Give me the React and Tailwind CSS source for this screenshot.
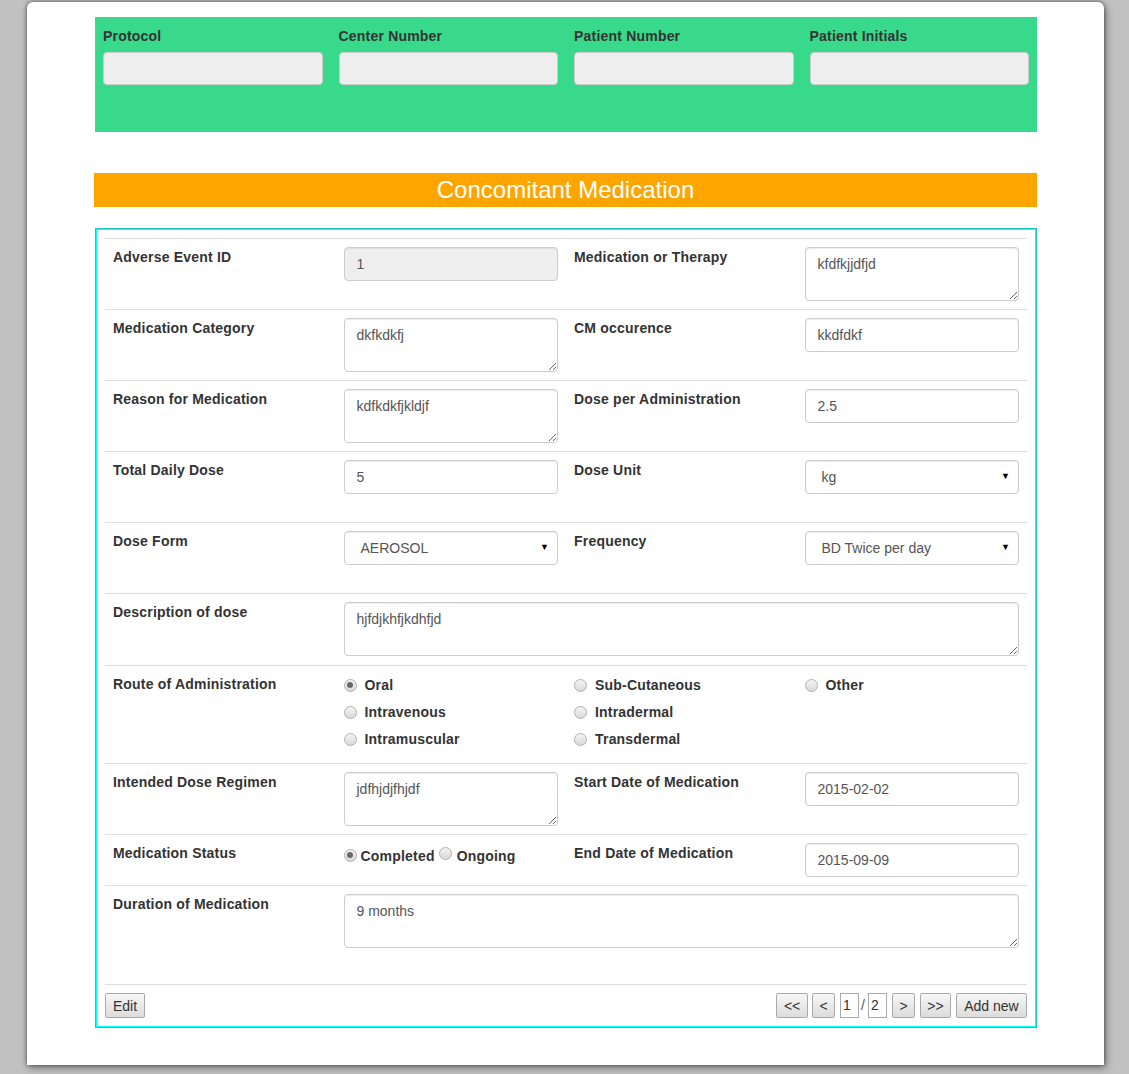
import React from "react";

const F = "font-['Liberation_Sans',Arial,Helvetica,sans-serif]";

function Label({ children }) {
  return <div className="text-[14px] font-bold leading-5 tracking-[0.2px] text-[#333]">{children}</div>;
}

function TextInput({ value, disabled }) {
  return (
    <input
      readOnly
      value={value}
      className={`block w-full h-[34px] border border-[#ccc] rounded-[4px] px-3 text-[14px] text-[#555] outline-none shadow-[inset_0_1px_1px_rgba(0,0,0,0.075)] ${F} ${
        disabled ? "bg-[#eeeeee]" : "bg-white"
      }`}
    />
  );
}

function TextArea({ value }) {
  return (
    <textarea
      readOnly
      defaultValue={value}
      className={`block w-full h-[54px] border border-[#ccc] rounded-[4px] px-3 py-[6px] leading-5 text-[14px] text-[#555] bg-white outline-none shadow-[inset_0_1px_1px_rgba(0,0,0,0.075)] ${F}`}
    />
  );
}

function Select({ value }) {
  return (
    <div className="flex h-[34px] items-center justify-between border border-[#ccc] rounded-[4px] bg-white pl-4 pr-[8px] text-[14px] text-[#555] shadow-[inset_0_1px_1px_rgba(0,0,0,0.075)]">
      <span>{value}</span>
      <span className="text-[9px] text-black">▼</span>
    </div>
  );
}

function Radio({ checked }) {
  return (
    <span className="relative inline-flex h-[13px] w-[13px] shrink-0 items-center justify-center rounded-full border border-[#b0b0b0] bg-gradient-to-b from-[#f4f4f4] to-[#d9d9d9]">
      {checked && <span className="h-[6px] w-[6px] rounded-full bg-[#6a6a6a]" />}
    </span>
  );
}

function RadioOpt({ label, checked }) {
  return (
    <div className="flex h-5 items-center">
      <Radio checked={checked} />
      <span className="ml-2 mt-px text-[14px] font-bold tracking-[0.2px] text-[#333]">{label}</span>
    </div>
  );
}

function Row({ h, children }) {
  return <div className={`flex border-t border-[#ddd] ${h}`}>{children}</div>;
}

function Cell({ children, w = "w-1/4" }) {
  return <div className={`${w} p-2`}>{children}</div>;
}

function Btn({ children, w }) {
  return (
    <button
      className={`h-[25px] ${w} rounded-[2px] border border-[#a9a9a9] bg-gradient-to-b from-[#f7f7f7] to-[#dcdcdc] text-[14px] leading-none text-[#333] ${F}`}
    >
      {children}
    </button>
  );
}

export default function App() {
  const topFields = ["Protocol", "Center Number", "Patient Number", "Patient Initials"];
  return (
    <div className={`min-h-screen bg-[#c1c1c1] pt-[2px] ${F}`}>
      <div className="ml-[27px] w-[1077px] h-[1063px] rounded-t-[6px] bg-white shadow-[0_0_4px_rgba(0,0,0,0.55),2px_3px_8px_rgba(0,0,0,0.35)] pl-[68px] pr-[67px] pt-[15px]">
        <div className="flex h-[115px] bg-[#38d98b]">
          {topFields.map((f) => (
            <div key={f} className="w-1/4 px-2 pt-[9px]">
              <div className="mb-[6px] text-[14px] font-bold leading-5 tracking-[0.2px] text-[#333]">{f}</div>
              <div className="h-[33px] rounded-[4px] border border-[#ccc] bg-[#eeeeee]" />
            </div>
          ))}
        </div>

        <div className="mt-[41px] -ml-px flex h-[34px] items-center justify-center bg-[#ffa500] text-[24px] text-white">
          Concomitant Medication
        </div>

        <div className="mt-[21px] border border-[#1cc6c6] shadow-[inset_0_0_0_1px_#00ffff] px-[9px] pt-[9px] pb-px">
          <Row h="h-[71px]">
            <Cell><Label>Adverse Event ID</Label></Cell>
            <Cell><TextInput value="1" disabled /></Cell>
            <Cell><Label>Medication or Therapy</Label></Cell>
            <Cell><TextArea value="kfdfkjjdfjd" /></Cell>
          </Row>
          <Row h="h-[71px]">
            <Cell><Label>Medication Category</Label></Cell>
            <Cell><TextArea value="dkfkdkfj" /></Cell>
            <Cell><Label>CM occurence</Label></Cell>
            <Cell><TextInput value="kkdfdkf" /></Cell>
          </Row>
          <Row h="h-[71px]">
            <Cell><Label>Reason for Medication</Label></Cell>
            <Cell><TextArea value="kdfkdkfjkldjf" /></Cell>
            <Cell><Label>Dose per Administration</Label></Cell>
            <Cell><TextInput value="2.5" /></Cell>
          </Row>
          <Row h="h-[71px]">
            <Cell><Label>Total Daily Dose</Label></Cell>
            <Cell><TextInput value="5" /></Cell>
            <Cell><Label>Dose Unit</Label></Cell>
            <Cell><Select value="kg" /></Cell>
          </Row>
          <Row h="h-[71px]">
            <Cell><Label>Dose Form</Label></Cell>
            <Cell><Select value="AEROSOL" /></Cell>
            <Cell><Label>Frequency</Label></Cell>
            <Cell><Select value="BD Twice per day" /></Cell>
          </Row>
          <Row h="h-[72px]">
            <Cell><Label>Description of dose</Label></Cell>
            <Cell w="w-3/4"><TextArea value="hjfdjkhfjkdhfjd" /></Cell>
          </Row>
          <Row h="h-[98px]">
            <Cell><Label>Route of Administration</Label></Cell>
            <Cell>
              <div className="mt-px flex flex-col gap-[7px]">
                <RadioOpt label="Oral" checked />
                <RadioOpt label="Intravenous" />
                <RadioOpt label="Intramuscular" />
              </div>
            </Cell>
            <Cell>
              <div className="mt-px flex flex-col gap-[7px]">
                <RadioOpt label="Sub-Cutaneous" />
                <RadioOpt label="Intradermal" />
                <RadioOpt label="Transdermal" />
              </div>
            </Cell>
            <Cell>
              <div className="mt-px flex flex-col gap-[7px]">
                <RadioOpt label="Other" />
              </div>
            </Cell>
          </Row>
          <Row h="h-[71px]">
            <Cell><Label>Intended Dose Regimen</Label></Cell>
            <Cell><TextArea value="jdfhjdjfhjdf" /></Cell>
            <Cell><Label>Start Date of Medication</Label></Cell>
            <Cell><TextInput value="2015-02-02" /></Cell>
          </Row>
          <Row h="h-[51px]">
            <Cell><Label>Medication Status</Label></Cell>
            <Cell>
              <div className="mt-[2px] flex h-5 items-center text-[14px] font-bold tracking-[0.2px] text-[#333]">
                <Radio checked />
                <span className="ml-[4px] mt-[2px]">Completed</span>
                <span className="ml-[4px]"><Radio /></span>
                <span className="ml-[5px] mt-[2px]">Ongoing</span>
              </div>
            </Cell>
            <Cell><Label>End Date of Medication</Label></Cell>
            <Cell><TextInput value="2015-09-09" /></Cell>
          </Row>
          <Row h="h-[99px]">
            <Cell><Label>Duration of Medication</Label></Cell>
            <Cell w="w-3/4"><TextArea value="9 months" /></Cell>
          </Row>

          <div className="flex items-center justify-between border-t border-[#ddd] pt-2 pb-2">
            <Btn w="w-[40px]">Edit</Btn>
            <div className="flex items-center">
              <Btn w="w-[32px]">&lt;&lt;</Btn>
              <span className="ml-[4px]"><Btn w="w-[23px]">&lt;</Btn></span>
              <div className="ml-[5px] flex h-[25px] w-[19px] items-center border border-[#aaa] bg-white pl-[2px] text-[14px] text-[#333]">1</div>
              <span className="mx-[2px] text-[14px] text-[#555]">/</span>
              <div className="ml-[1px] flex h-[25px] w-[19px] items-center border border-[#aaa] bg-white pl-[2px] text-[14px] text-[#333]">2</div>
              <span className="ml-[5px]"><Btn w="w-[23px]">&gt;</Btn></span>
              <span className="ml-[5px]"><Btn w="w-[31px]">&gt;&gt;</Btn></span>
              <span className="ml-[5px]"><Btn w="w-[71px]">Add new</Btn></span>
            </div>
          </div>
        </div>
      </div>
    </div>
  );
}
